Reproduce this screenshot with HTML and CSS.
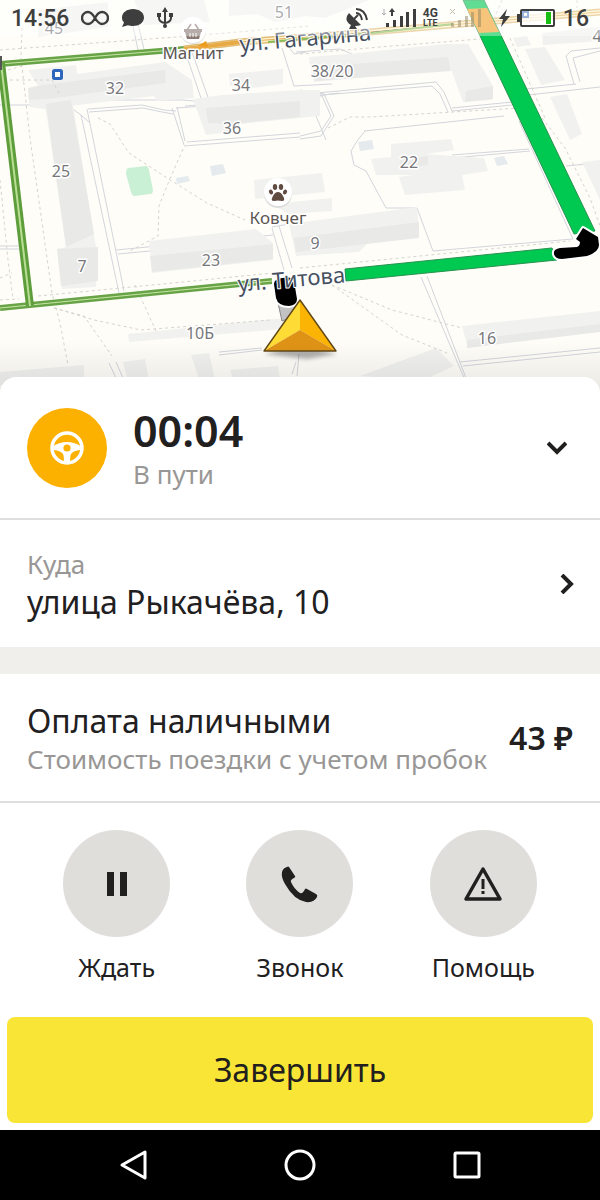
FILE: index.html
```html
<!DOCTYPE html>
<html lang="ru">
<head>
<meta charset="utf-8">
<meta name="viewport" content="width=device-width, initial-scale=1">
<title>В пути</title>
<link rel="stylesheet" href="styles.css">
</head>
<body>
<div class="screen">
  <header class="map-area">
    <svg class="map" viewBox="0 0 600 396" preserveAspectRatio="xMidYMin slice" role="img" aria-label="Карта">
      <defs>
        <linearGradient id="fade" x1="0" y1="0" x2="0" y2="1">
          <stop offset="0" stop-color="#000" stop-opacity="0"/>
          <stop offset="1" stop-color="#000" stop-opacity=".09"/>
        </linearGradient>
        <filter id="soft" x="-30%" y="-30%" width="160%" height="180%"><feGaussianBlur stdDeviation="2"/></filter>
      </defs>
      <rect width="600" height="396" fill="#fefdf8"/>

      <g class="lanes">
        <path d="M133 26l5 24M138 24l6 25M186 54l16 47M192 52l17 48"/>
        <path d="M0 105h67l14 10 8 7M72 100h110l25 2M88 109l54-4 22 5 12 1M89 112l54-4 19 4 11 2"/>
        <path d="M81 115l38 178M87 109l37 182M172 108l12 37M177 107l8 34M184 146l116-9M187 142l113-9"/>
        <path d="M116 250l157-15M118 254l32-3M0 246h20M0 249h20M272 228l12 42M279 226l13 42M272 227l17-3"/>
        <path d="M176 108l100-7 63-8M185 106l90-7M282 48l12 38 38-2M288 46l6 8 12-2M306 92l20 48M300 94l22 2 9 20-10 15-21 5M300 90l24 4 10 22-13 20-21 3"/>
        <path d="M296 52l44-3 12 5M306 94l130-12 8 10 8 19 60-6M310 96l122-10 8 8 8 18M452 108l60-6M526 89l50-5M528 95l72-8M574 84l-8-28 5-5 29-3M580 82l-7-24 27-7"/>
        <path d="M364 131l140-15M365 131l-8 10-6 10 3 14 12 6 20 37 31 0 16 43 140-12-54-118M452 155l77-6M452 158l78-7M566 166l20-2"/>
        <path d="M421 277l44 103M427 276l39 102M460 362l140-14M463 366l137-14M219 352l43-4M219 355l43-5M296 362l-4 12M299 354l-2 22M109 363l7 15M116 362l7 16"/>
      </g>

      <g class="block">
        <path d="M38 10l70-8v25l-70 10zM134 0h70l6 22-66 3zM229 0h140l-44 18-20-2-30 6-18-8-28 2zM28 70l48-5 1 9 88-12 27 18 2 18-37 3-3-5-110 13-14-2-2-12 14-3z"/>
        <path d="M229 74l54-5v15l-31 4-1-4-21 2zM193 99l30-4 77-5 20 0v26l-90 9-1 7-23 3-11-30z"/>
        <path d="M309 57l39-3 98-10 22 0 25 42-2 14-28 2-12-33-137 13-4-16zM513 38l14-2 4 9-14 2zM542 33l58-6v14l-57 4zM525 49l20-2 20 33-24 5zM550 97l17-3 15 40-12 6z"/>
        <path d="M44 102l28-3 24 148v40l-34 2-5-40 9-2-19-130zM149 241l107-12 17 14v17l-121 13z"/>
        <path d="M254 180l68-7 3 19-70 7zM272 204l60-6v13l-44 3zM289 224l128-17 2 25-48 8-12 12-63 4z"/>
        <path d="M391 144l60-5 3 11-28 4 58 4 4 13-26 4 3 15-60 5-6-18 15-2-38 0-5-16 20-2zM582 162l18-2v40zM462 326l138-15v17l-132 20zM360 376l76-28 18 18-30 14zM128 334l146-15 20-1v10l-165 14zM0 372l84-7v20H0zM123 362l22-3 4 21-21 2zM191 355l18-2 6 26h-16zM230 370l48-4 2 14-46 2z"/>
      </g>
      <g class="block-face">
        <path d="M28 88l14-3 123-15 1 13-110 15-27 2zM206 108l94-7v16l-70 7-22-1zM312 67l136-10 3 14-136 10zM466 91l27-5v13l-28 3zM46 104l25-4 23 134-28 13zM57 249l41-2v34l-37 5zM150 256l123-12v15l-121 13zM294 238l125-16v16l-123 14zM467 340l133-16v8l-133 16zM400 160l28-4v9l-28 4z"/>
      </g>
      <path class="park" d="M128 168l18-2q2 0 3 4l4 20q0 4-3 4l-15 2q-3 0-4-4l-5-18q0-5 2-6z"/>
      <path class="pond" d="M176 178l12-2 2 5-13 3zM210 166l13-2 3 9-14 3zM358 142l14-2 2 9-14 2zM494 158l10-2 4 8-11 2z"/>

      <g class="paths">
        <path d="M22 28l-1 30 9 80 22 155 8 30 8 42M0 180l8 80 5 39M8 70l18-5M0 50l190-14 120-10M38 296l145-14 100-10M98 118l12 6 19 29 38 25 40 25 38 17M183 149l-14 32-10 25-1 30-28 15M135 285l21 46M54 308l30 8 28 40M54 308l40 12 47 10 130-10M10 80h42l8 15M300 54l80-7 100-8"/>
        <path d="M328 128l22-11 20 0 150-9M542 118l23 30 25 50 10 28M510 38l35 80M300 268l220-22 50-5M332 285l70 50 45 18M332 285l60 25 70 18M470 0l10 30M502 0l-10 24M577 0v8M0 278l12-5M0 300l19-1"/>
      </g>

      <g class="green-road">
        <path d="M1 63L30 306M0 64l185-15M0 308l272-27"/>
      </g>
      <g class="green-road-line">
        <path d="M1 63L30 306M0 64l185-15M0 308l272-27"/>
      </g>
      <path d="M1 63L30 306" stroke="#5e9d3b" stroke-width="8"/>
      <path d="M1 63L30 306" stroke="#b9df92" stroke-width="2"/>
      <path d="M-2 56h4v14h-4z" fill="#555"/>

      <path d="M184 49l56-7 130-10 230-20" stroke="#dfbb78" stroke-width="7" fill="none"/>
      <path d="M184 49l56-7 130-10 230-20" stroke="#fff2ca" stroke-width="4" fill="none"/>
      <path d="M184 49l56-7" stroke="#eaa83c" stroke-width="4"/>
      <path d="M184 48l56-6 130-10 230-20" stroke="#e4ae54" stroke-width="1" fill="none"/>
      <path d="M198 46l8-5 2 6z" fill="#ee9c1e"/>
      <path d="M268 42l105-9 80-9" stroke="#8abd5c" stroke-width="2"/>

      <g class="route">
        <path d="M463 0h21l111 231-21 3z"/>
        <path d="M345 269l207-21 5 12-211 21z"/>
      </g>
      <path d="M467 9l20-1 12 24-20 1z" fill="#f2a02a"/>

      <path d="M278 303l16-3 6 14-18 7z" fill="#c2c2c2" stroke="#888"/>
      <g stroke="#fff" stroke-width="4" paint-order="stroke" stroke-linejoin="round">
        <path d="M274 284q0-5 8-6 11-2 12 3l3 18q0 6-8 7-11 0-13-8z"/>
        <path d="M583 228l15 9 1 8q0 7-12 11l-25 3q-7 0-8-5-1-5 6-6l17-1q3-1 3-5l-4-3z"/>
      </g>

      <g class="house">
        <text x="54" y="34">45</text><text x="284" y="18">51</text>
        <text x="115" y="94">32</text><text x="241" y="91">34</text>
        <text x="332" y="77">38/20</text><text x="232" y="134">36</text>
        <text x="61" y="177">25</text><text x="409" y="168">22</text>
        <text x="82" y="272">7</text><text x="211" y="266">23</text>
        <text x="315" y="249">9</text><text x="200" y="339">10Б</text>
        <text x="487" y="344">16</text><text x="597" y="42">4</text>
      </g>
      <g class="place"><text x="193" y="59">Магнит</text><text x="278" y="224">Ковчег</text></g>
      <g class="street">
        <text x="306" y="46" transform="rotate(-5 306 46)">ул. Гагарина</text>
        <text x="292" y="287" transform="rotate(-5 292 287)">ул. Титова</text>
      </g>

      <g>
        <circle cx="193" cy="31" r="13" fill="#ddd"/><circle cx="193" cy="30" r="13" fill="#fff"/>
        <path d="M184 29h18v3h-1l-2 7h-12l-2-7h-1z" fill="#8a7a74"/>
        <path d="M187 30l4-6M199 30l-4-6" stroke="#8a7a74" stroke-width="1.5"/>
        <path d="M190 33v4M193 33v4M196 33v4" stroke="#fff"/>
        <circle cx="278" cy="194" r="14" fill="#ddd"/><circle cx="278" cy="192" r="14" fill="#fff"/>
        <g fill="#604b41">
          <path d="M278 192q3 0 5 4 3 5-1 5-4-1-8 0-4 0-1-5 2-4 5-4z"/>
          <ellipse cx="275" cy="187" rx="2.2" ry="3"/><ellipse cx="281" cy="187" rx="2.2" ry="3"/>
          <ellipse cx="271" cy="192" rx="2" ry="2.600" transform="rotate(-25 271 192)"/><ellipse cx="285" cy="192" rx="2" ry="2.600" transform="rotate(25 285 192)"/>
        </g>
        <rect x="53.500" y="70.500" width="8" height="8" rx="1" fill="#fff" stroke="#2f66bd" stroke-width="3"/>
      </g>

      <path d="M264 354l36-10 37 10-30 5z" fill="#000" opacity=".3" filter="url(#soft)"/>
      <path d="M300 300L264 351l36-21z" fill="#ffdc35"/>
      <path d="M300 300l36 51-36-21z" fill="#fbb403"/>
      <path d="M264 351l36-21 36 21z" fill="#df9316"/>
      <path d="M300 300l-36 51h72z" fill="none" stroke="#614716" stroke-width="1.400" stroke-linejoin="round"/>
      <rect y="340" width="600" height="56" fill="url(#fade)"/>
    </svg>

    <div class="status">
      <div class="status-left">
        <time>14:56</time>
        <svg width="28" height="22" viewBox="0 0 28 22" fill="none" stroke="#3e3e3e" stroke-width="2.400"><path d="M14 11C11 6 9 5 7 5a6 6 0 000 12c3 0 5-2 7-6s4-6 7-6a6 6 0 010 12c-2 0-4-1-7-6z"/></svg>
        <svg width="24" height="22" viewBox="0 0 24 22" fill="#3e3e3e"><path d="M12 2c6 0 11 3.500 11 8.500S18 19 12 19c-2 0-4-.3-5-.8L1 20l2-4.500C1.500 14 1 12.500 1 10.500 1 5.500 6 2 12 2z"/></svg>
        <svg width="16" height="22" viewBox="0 0 16 22" fill="none" stroke="#3e3e3e" stroke-width="2"><path d="M8 3v16M2 8v3q0 4 6 5M14 8v3q0 4-6 5"/><path d="M8 0l3 5H5zM0 6h4v4H0zM12 6h4v4h-4z" fill="#3e3e3e" stroke="none"/><circle cx="8" cy="19" r="2" fill="#3e3e3e" stroke="none"/></svg>
      </div>
      <div class="status-right">
        <svg width="22" height="24" viewBox="0 0 22 24" fill="#3e3e3e"><path d="M3 7l12 12q-3 1-6 1l2 3H3l2-4Q-3 14 3 7z"/><path d="M8 13l4-4" stroke="#3e3e3e" stroke-width="2"/><path d="M10 7q5 0 6 7M10 3q9 0 11 11" fill="none" stroke="#3e3e3e" stroke-width="2"/></svg>
        <svg class="signal" width="32" height="22" viewBox="0 0 32 22" fill="#3e3e3e"><path d="M2 16h3v4H2zM9 13h3v7H9zM16 9h3v11h-3zM22 5h3v15h-3zM29 2h3v18h-3zM8 1l3 4H9v4H7V5H5z"/><path d="M0 2v6M-2 6l2 2 2-2" stroke="#aaa" fill="none"/></svg>
        <span class="net"><b>4G</b><b>LTE</b></span>
        <svg class="faint" width="32" height="22" viewBox="0 0 32 22" fill="#8f8566"><path d="M2 16h3v4H2zM9 13h3v7H9zM16 9h3v11h-3zM22 5h3v15h-3zM29 2h3v18h-3z"/><path d="M1 2l5 5M6 2L1 7" stroke="#8f8566"/></svg>
        <svg class="bolt" width="11" height="18" viewBox="0 0 11 18" fill="#3e3e3e"><path d="M8 0L0 10h4l-2 8 9-11H6z"/></svg>
        <svg width="39" height="20" viewBox="0 0 39 20"><rect x="4" y="2" width="33" height="16" rx="1" fill="#fff" fill-opacity=".7" stroke="#3e3e3e" stroke-width="2"/><path d="M0 6h3v8H0z" fill="#3e3e3e"/><path d="M29 4h5v12h-5z" fill="#18bf12"/><rect x="6" y="4" width="5" height="5" fill="none" stroke="#9ab3dc" stroke-width="2"/></svg>
        <span class="charge">16</span>
      </div>
    </div>
  </header>

  <main class="sheet">
    <section class="row trip">
      <span class="wheel">
        <svg width="34" height="34" viewBox="0 0 34 34"><circle cx="17" cy="17" r="15" fill="none" stroke="#fff" stroke-width="3.500"/><path d="M2 16q7-5 15-5t15 5v3q-8 0-11 4-1 2-1 9h-6q0-7-1-9-3-4-11-4z" fill="#fff"/><circle cx="17" cy="17" r="3.600" fill="#fcb000"/></svg>
      </span>
      <div class="grow">
        <h1>00:04</h1>
        <p class="note">В пути</p>
      </div>
      <button class="icon-button collapse" aria-label="Свернуть"><svg width="20" height="20" viewBox="0 0 20 20"><path d="M1 5l9 9 9-9"/></svg></button>
    </section>
    <a class="row dest" href="#route">
      <span class="grow">
        <span class="note">Куда</span>
        <span class="title">улица Рыкачёва, 10</span>
      </span>
      <svg class="chevron" width="20" height="20" viewBox="0 0 20 20"><path d="M6 1l9 9-9 9"/></svg>
    </a>
    <section class="row pay">
      <div class="grow">
        <h2 class="title">Оплата наличными</h2>
        <p class="note">Стоимость поездки с учетом пробок</p>
      </div>
      <strong class="price">43 ₽</strong>
    </section>
    <div class="actions">
      <button class="action"><span class="disc"><svg width="40" height="40" viewBox="0 0 40 40"><path d="M10 8h7v24h-7zM23 8h7v24h-7z"/></svg></span>Ждать</button>
      <button class="action"><span class="disc"><svg width="40" height="40" viewBox="0 0 40 40"><path d="M9 3l6 9q1 1-1 2-4 2-3 4 3 7 9 11 3 1 5-4 1-1 2 0l9 5q2 1 1 3-3 6-11 5Q14 36 5 20 1 13 2 8q1-4 5-5 1-1 2 0z"/></svg></span>Звонок</button>
      <button class="action"><span class="disc"><svg width="40" height="40" viewBox="0 0 40 40"><path d="M20 5L3 35h34z" fill="none" stroke="#21201f" stroke-width="3.500" stroke-linejoin="round"/><path d="M18.500 15h3v10h-3zM18.500 27h3v3h-3z"/></svg></span>Помощь</button>
    </div>
    <button class="finish">Завершить</button>
  </main>

  <nav class="navbar" aria-label="Система">
    <button class="icon-button" aria-label="Назад"><svg width="34" height="34" viewBox="0 0 34 34"><path d="M29 4v26L6 17z"/></svg></button>
    <button class="icon-button" aria-label="Домой"><svg width="34" height="34" viewBox="0 0 34 34"><circle cx="17" cy="17" r="14"/></svg></button>
    <button class="icon-button" aria-label="Недавние"><svg width="34" height="34" viewBox="0 0 34 34"><rect x="5" y="5" width="24" height="24" rx="1"/></svg></button>
  </nav>
</div>
</body>
</html>
```
FILE: styles.css
```css
* { box-sizing: border-box; }
body {
  margin: 0;
  background: #fff;
  color: #21201f;
  font-family: "Noto Sans", "Open Sans", sans-serif;
}
h1, h2, p { margin: 0; }
button { border: 0; background: none; padding: 0; font: inherit; color: inherit; }
a { color: inherit; text-decoration: none; }
svg { display: block; flex: none; }

.screen { min-height: 100vh; display: flex; flex-direction: column; }

.map-area { position: relative; overflow: hidden; }
.map { width: 100%; height: 396px; }
.lanes path { fill: none; stroke: #d3d5dc; stroke-width: 1; }
.block { fill: #f1f1ef; }
.block-face { fill: #e9e9e8; }
.park { fill: #c9f0d4; }
.pond { fill: #e4eaed; }
.paths path { fill: none; stroke: #d6d4ce; stroke-width: 1; stroke-dasharray: 3 3; }
.green-road path { fill: none; stroke: #68a447; stroke-width: 6; }
.green-road-line path { fill: none; stroke: #c6e6a4; stroke-width: 1; }
.route { fill: #00c952; stroke: #27924f; stroke-width: 1; }
.map text { text-anchor: middle; paint-order: stroke; stroke: #fff; stroke-width: 3px; stroke-linejoin: round; }
.house { font-size: 16px; fill: #77777a; }
.place { font-size: 17px; fill: #5d5653; }
.map .street text { font-size: 22px; fill: #46505f; stroke-width: 2px; }

.status {
  position: absolute;
  inset: 0 0 auto;
  height: 36px;
  padding: 0 11px;
  display: flex;
  justify-content: space-between;
  align-items: center;
  background: rgba(255, 255, 255, .38);
  color: #3e3e3e;
  font-family: Roboto, sans-serif;
  font-size: 23px;
  font-weight: 500;
}
.status-left, .status-right { display: flex; align-items: center; }
.status-left { gap: 12px; }
.status-right { gap: 7px; }
.signal { margin-left: 9px; overflow: visible; }
.faint { margin-left: 4px; opacity: .5; }
.bolt { margin-left: 11px; }
.net { display: flex; flex-direction: column; align-items: center; font-size: 12px; line-height: 11px; }
.net b + b { font-size: 9px; line-height: 9px; }

.sheet {
  position: relative;
  flex: 1;
  display: flex;
  flex-direction: column;
  margin-top: -19px;
  border-radius: 16px 16px 0 0;
  background: #fff;
}
.row { display: flex; align-items: center; padding: 0 27px; }
.grow { flex: 1; min-width: 0; }
.note { display: block; font-size: 26px; line-height: 36px; color: #999796; }
.title { display: block; font-size: 32px; line-height: 40px; font-weight: 400; }
.trip { min-height: 143px; gap: 26px; border-bottom: 2px solid #dedede; }
.trip .grow { padding-top: 3px; }
.trip h1 { font-size: 43px; line-height: 50px; font-weight: 600; }
.wheel {
  display: grid;
  place-items: center;
  width: 80px;
  height: 80px;
  border-radius: 50%;
  background: #fcb000;
}
.collapse, .chevron { fill: none; stroke: #21201f; stroke-width: 4; }
.collapse { padding: 0 6px; }
.chevron { margin-right: -3px; }
.dest { min-height: 127px; }
.pay { min-height: 156px; border-top: 27px solid #f0efec; border-bottom: 2px solid #dedede; }
.pay .title { padding-top: 2px; }
.price { font-size: 32px; line-height: 40px; font-weight: 600; }

.actions { display: flex; flex: 1; align-items: flex-start; padding: 27px 25px; }
.action {
  flex: 1;
  display: flex;
  flex-direction: column;
  align-items: center;
  gap: 12px;
  font-size: 25px;
  line-height: 36px;
}
.disc {
  display: grid;
  place-items: center;
  width: 107px;
  height: 107px;
  border-radius: 50%;
  background: #dfdedb;
}
.disc svg { fill: #21201f; }
.finish {
  margin: 0 7px 7px;
  padding: 29px 16px;
  border-radius: 8px;
  background: #f9e535;
  font-size: 32px;
  line-height: 48px;
}

.navbar { display: flex; justify-content: center; gap: 133px; padding: 18px 16px; background: #000; }
.navbar svg { fill: none; stroke: #fff; stroke-width: 3; stroke-linejoin: round; }
```
